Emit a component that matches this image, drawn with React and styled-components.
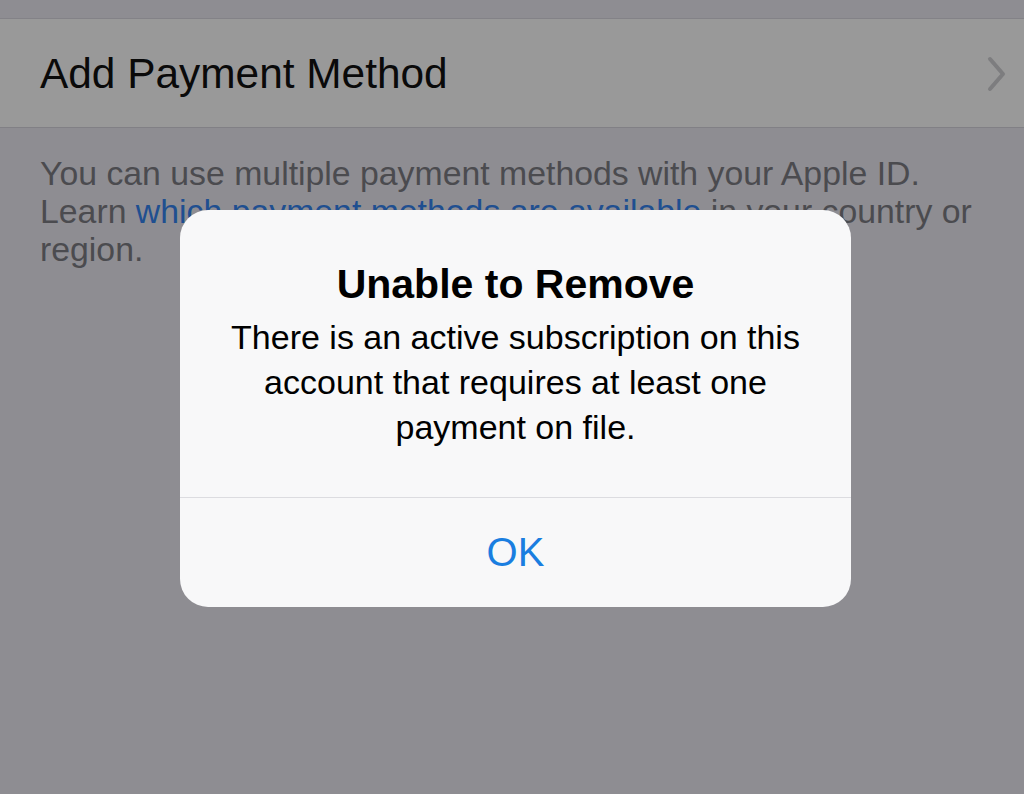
import React from "react";
import styled, { createGlobalStyle } from "styled-components";

const Global = createGlobalStyle`
  html, body { margin: 0; padding: 0; }
  body { background: #8e8d92; font-family: "Liberation Sans", Arial, sans-serif; }
`;

const Screen = styled.div`
  position: relative;
  width: 1024px;
  height: 794px;
  overflow: hidden;
  background: #8e8d92;
  padding-top: 18px;
  box-sizing: border-box;
`;

const Group = styled.div`
  border-top: 1px solid #838287;
  border-bottom: 1px solid #818085;
  background: #999999;
`;

const Row = styled.div`
  display: flex;
  align-items: center;
  justify-content: space-between;
  height: 108px;
  padding: 2px 17px 0 40px;
  box-sizing: border-box;
`;

const RowLabel = styled.span`
  font-size: 42.4px;
  color: #0a0a0a;
`;

const Chevron = styled.svg`
  width: 20px;
  height: 36px;
  display: block;
`;

const Footer = styled.p`
  margin: 0;
  padding: 26px 40px 0 40px;
  font-size: 33.8px;
  line-height: 38px;
  color: #4b4b4f;
`;

const Link = styled.span`
  color: #1f4f90;
`;

const Alert = styled.div`
  position: absolute;
  left: 180px;
  top: 210px;
  width: 671px;
  height: 397px;
  border-radius: 28px;
  background: #f8f8f9;
  display: flex;
  flex-direction: column;
  overflow: hidden;
`;

const AlertBody = styled.div`
  height: 287px;
  box-sizing: border-box;
  padding: 51px 38px 0;
  text-align: center;
  color: #000;
`;

const Title = styled.h2`
  margin: 0 0 8px;
  font-size: 41px;
  font-weight: 700;
  line-height: 46px;
`;

const Message = styled.p`
  margin: 0;
  font-size: 34px;
  line-height: 45px;
`;

const Divider = styled.div`
  height: 1px;
  background: #dcdce0;
`;

const Button = styled.div`
  flex: 1;
  display: flex;
  align-items: center;
  justify-content: center;
  font-size: 40px;
  color: #1a7ee0;
`;

export default function App() {
  return (
    <>
      <Global />
      <Screen>
        <Group>
          <Row>
            <RowLabel>Add Payment Method</RowLabel>
            <Chevron viewBox="0 0 20 36">
              <path d="M3 3 L16 18 L3 33" fill="none" stroke="#7d7d7f" strokeWidth="4" strokeLinecap="round" strokeLinejoin="round" />
            </Chevron>
          </Row>
        </Group>
        <Footer>
          You can use multiple payment methods with your Apple ID. Learn{" "}
          <Link>which payment methods are available</Link> in your country or region.
        </Footer>
        <Alert>
          <AlertBody>
            <Title>Unable to Remove</Title>
            <Message>
              There is an active subscription on this account that requires at least one payment on file.
            </Message>
          </AlertBody>
          <Divider />
          <Button>OK</Button>
        </Alert>
      </Screen>
    </>
  );
}
